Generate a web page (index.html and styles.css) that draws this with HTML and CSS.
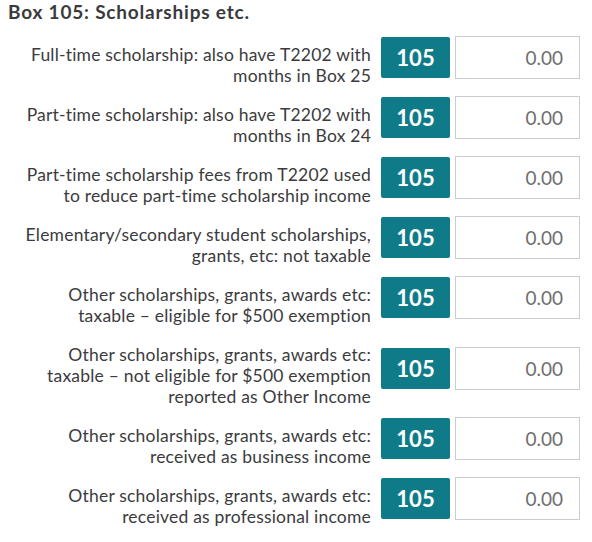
FILE: index.html
```html
<!DOCTYPE html>
<html>
<head>
<meta charset="utf-8">
<link rel="stylesheet" href="styles.css">
</head>
<body>
<div class="page">
  <h2 class="title">Box 105: Scholarships etc.</h2>
  <div class="rows">
    <div class="row">
      <div class="label">Full-time scholarship: also have T2202 with<br>months in Box 25</div>
      <div class="controls"><span class="badge">105</span><span class="field">0.00</span></div>
    </div>
    <div class="row">
      <div class="label">Part-time scholarship: also have T2202 with<br>months in Box 24</div>
      <div class="controls"><span class="badge">105</span><span class="field">0.00</span></div>
    </div>
    <div class="row">
      <div class="label">Part-time scholarship fees from T2202 used<br>to reduce part-time scholarship income</div>
      <div class="controls"><span class="badge">105</span><span class="field">0.00</span></div>
    </div>
    <div class="row">
      <div class="label">Elementary/secondary student scholarships,<br>grants, etc: not taxable</div>
      <div class="controls"><span class="badge">105</span><span class="field">0.00</span></div>
    </div>
    <div class="row">
      <div class="label">Other scholarships, grants, awards etc:<br>taxable – eligible for $500 exemption</div>
      <div class="controls"><span class="badge">105</span><span class="field">0.00</span></div>
    </div>
    <div class="row">
      <div class="label">Other scholarships, grants, awards etc:<br>taxable – not eligible for $500 exemption<br>reported as Other Income</div>
      <div class="controls"><span class="badge">105</span><span class="field">0.00</span></div>
    </div>
    <div class="row">
      <div class="label">Other scholarships, grants, awards etc:<br>received as business income</div>
      <div class="controls"><span class="badge">105</span><span class="field">0.00</span></div>
    </div>
    <div class="row">
      <div class="label">Other scholarships, grants, awards etc:<br>received as professional income</div>
      <div class="controls"><span class="badge">105</span><span class="field">0.00</span></div>
    </div>
  </div>
</div>
</body>
</html>
```
FILE: styles.css
```css
html, body {
  margin: 0;
  padding: 0;
  background: #ffffff;
}
.page {
  font-family: Lato, "Liberation Sans", sans-serif;
  color: #3b3b3d;
  padding: 0 0 0 8px;
  width: 584px;
}
.title {
  margin: 0;
  font-size: 19px;
  font-weight: 700;
  letter-spacing: 0.8px;
  line-height: 24px;
  height: 36px;
  color: #3a3a3c;
}
.rows {
  display: flex;
  flex-direction: column;
  gap: 2px;
}
.row {
  display: flex;
  align-items: center;
}
.label {
  width: 363px;
  text-align: right;
  font-size: 17.5px;
  letter-spacing: 0.2px;
  line-height: 21px;
  padding: 8px 0;
  white-space: nowrap;
}
.controls {
  display: flex;
  align-items: center;
  gap: 5px;
  margin-left: 10px;
  margin-bottom: 15px;
}
.badge {
  width: 69px;
  height: 41px;
  background: #0f7b88;
  border-radius: 2px;
  color: #ffffff;
  font-size: 22px;
  font-weight: 700;
  display: flex;
  align-items: center;
  justify-content: center;
}
.field {
  box-sizing: border-box;
  width: 125px;
  height: 43px;
  border: 1px solid #cccccc;
  display: flex;
  align-items: center;
  justify-content: flex-end;
  padding-right: 16px;
  font-size: 19px;
  font-weight: 400;
  color: #6e6e6e;
}
```
